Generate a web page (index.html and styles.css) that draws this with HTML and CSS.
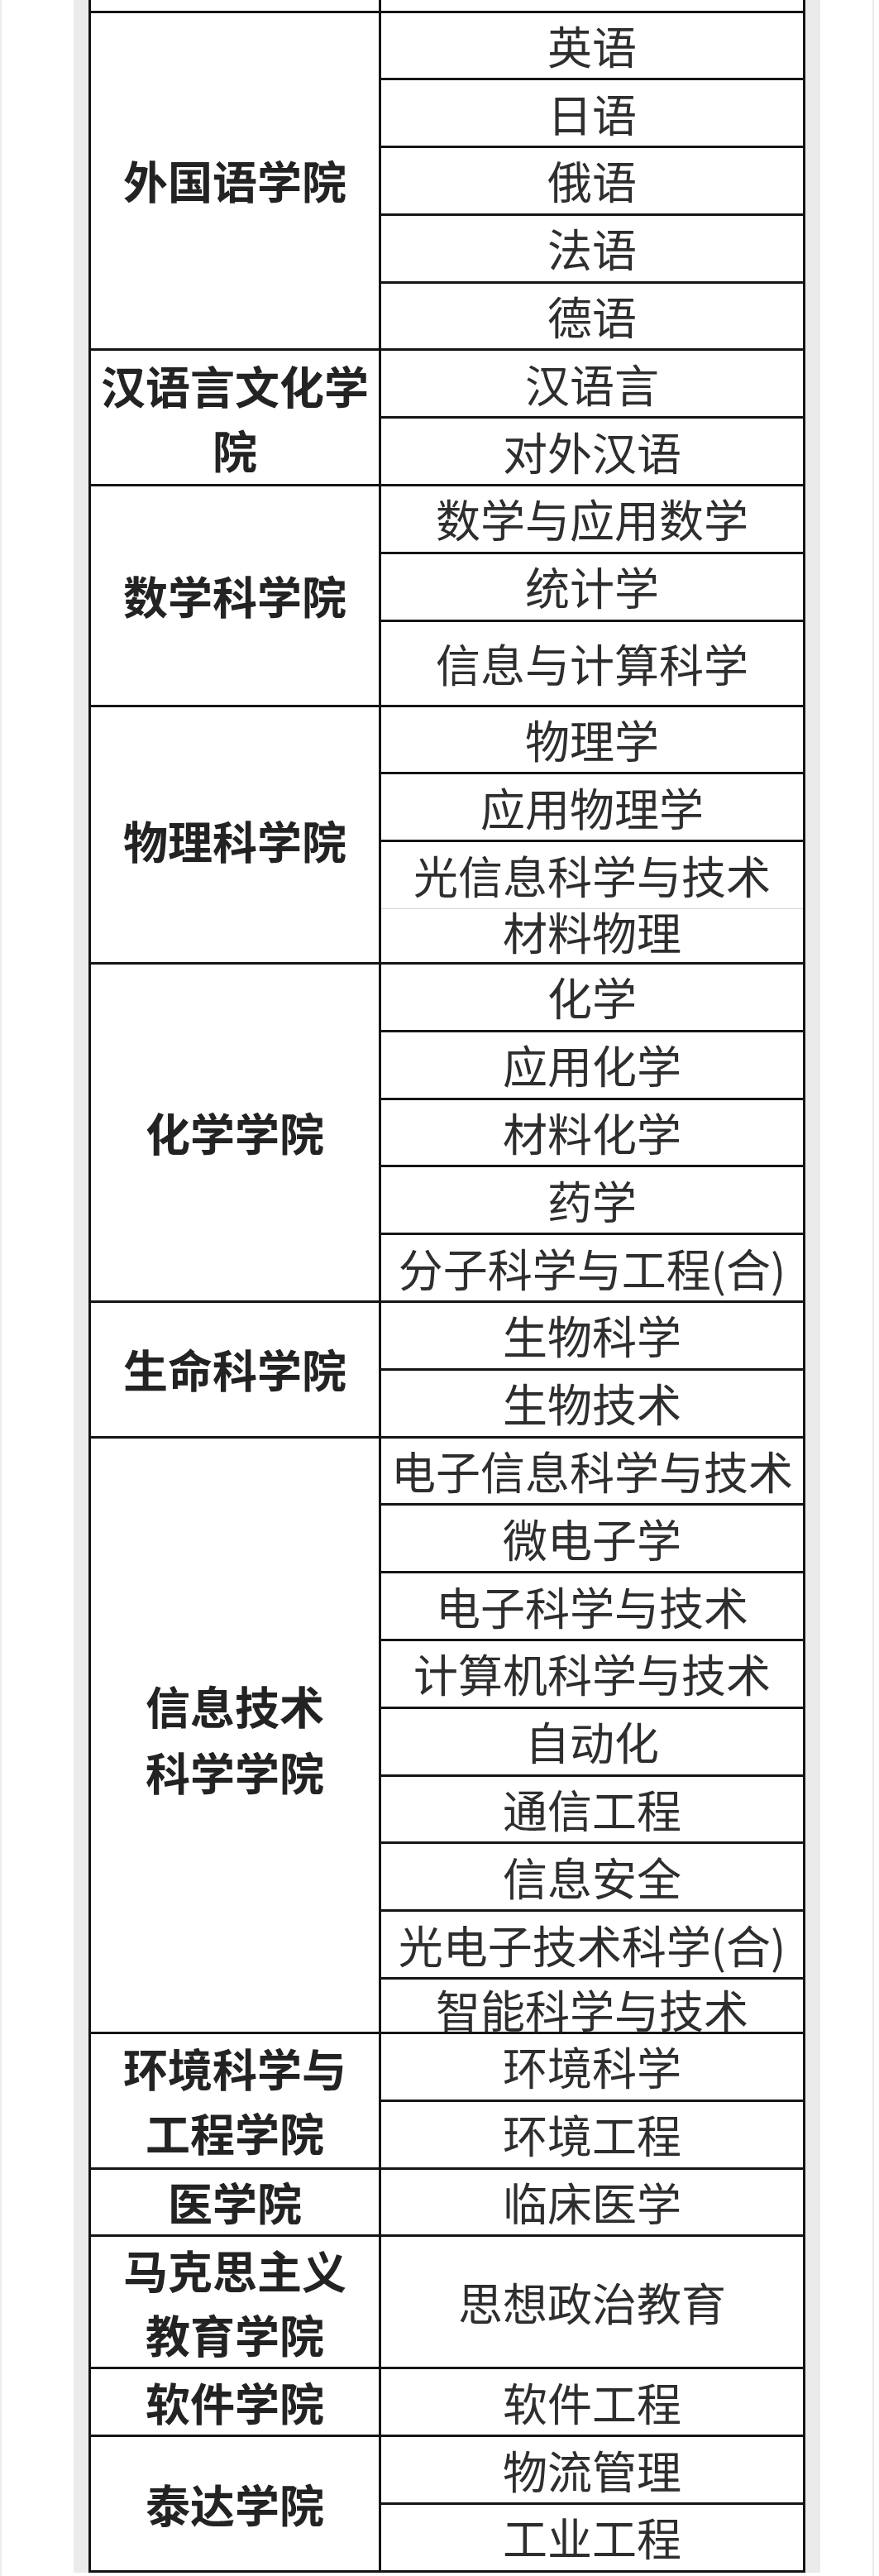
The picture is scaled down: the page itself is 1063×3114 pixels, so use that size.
FILE: index.html
```html
<!DOCTYPE html>
<html lang="zh-CN">
<head>
<meta charset="utf-8">
<title>学院专业设置</title>
<link rel="stylesheet" href="styles.css">
</head>
<body>
<div class="screen">
  <div class="sheet">
    <table class="majors">
      <colgroup><col class="c-college"><col class="c-major"></colgroup>
      <tbody>
        <tr class="r-top"><td></td><td></td></tr>

        <tr><th rowspan="5">外国语学院</th><td>英语</td></tr>
        <tr><td>日语</td></tr>
        <tr><td>俄语</td></tr>
        <tr><td>法语</td></tr>
        <tr><td>德语</td></tr>

        <tr><th rowspan="2" class="multi">汉语言文化学院</th><td>汉语言</td></tr>
        <tr><td>对外汉语</td></tr>

        <tr><th rowspan="3">数学科学院</th><td>数学与应用数学</td></tr>
        <tr><td>统计学</td></tr>
        <tr class="r-tall"><td>信息与计算科学</td></tr>

        <tr><th rowspan="4" class="lower">物理科学院</th><td>物理学</td></tr>
        <tr><td>应用物理学</td></tr>
        <tr><td class="faint-bottom">光信息科学与技术</td></tr>
        <tr class="r-short"><td class="faint-top top-cut">材料物理</td></tr>

        <tr><th rowspan="5">化学学院</th><td>化学</td></tr>
        <tr><td>应用化学</td></tr>
        <tr><td>材料化学</td></tr>
        <tr><td>药学</td></tr>
        <tr><td>分子科学与工程(合)</td></tr>

        <tr><th rowspan="2">生命科学院</th><td>生物科学</td></tr>
        <tr><td>生物技术</td></tr>

        <tr><th rowspan="9" class="multi lower">信息技术<br>科学学院</th><td>电子信息科学与技术</td></tr>
        <tr><td>微电子学</td></tr>
        <tr><td>电子科学与技术</td></tr>
        <tr><td>计算机科学与技术</td></tr>
        <tr><td>自动化</td></tr>
        <tr><td>通信工程</td></tr>
        <tr><td>信息安全</td></tr>
        <tr><td>光电子技术科学(合)</td></tr>
        <tr class="r-short"><td class="bottom-cut">智能科学与技术</td></tr>

        <tr><th rowspan="2" class="multi">环境科学与<br>工程学院</th><td>环境科学</td></tr>
        <tr><td>环境工程</td></tr>

        <tr><th>医学院</th><td>临床医学</td></tr>

        <tr class="r-double"><th class="multi">马克思主义<br>教育学院</th><td>思想政治教育</td></tr>

        <tr><th>软件学院</th><td>软件工程</td></tr>

        <tr><th rowspan="2">泰达学院</th><td>物流管理</td></tr>
        <tr><td>工业工程</td></tr>
      </tbody>
    </table>
  </div>
</div>
</body>
</html>
```

FILE: styles.css
```css
html, body {
  margin: 0;
  padding: 0;
  background: #ffffff;
}

.screen {
  width: 1057px;
  height: 3114px;
  box-sizing: border-box;
  border-left: 2px solid #ececec;
  border-right: 2px solid #ececec;
  overflow: hidden;
  background: #ffffff;
}

.sheet {
  margin-left: 87px;
  width: 867px;
  padding: 0 18px 0 18px;
  background: #ebebeb;
}

.majors {
  border-collapse: collapse;
  table-layout: fixed;
  width: 867px;
  font-family: "Noto Sans CJK SC", "Noto Sans", sans-serif;
  font-size: 54px;
  background: #ffffff;
}

.c-college { width: 351px; }
.c-major { width: 513px; }

.majors tr { height: 81.8px; }
.majors tr.r-top { height: 14px; }
.majors tr.r-tall { height: 103px; }
.majors tr.r-short { height: 66px; }
.majors tr.r-double { height: 160px; }

.majors th,
.majors td {
  border: 3px solid #151515;
  padding: 0;
  text-align: center;
  vertical-align: middle;
}

.majors th {
  font-weight: 700;
  color: #232323;
  line-height: 64px;
}

.majors th.multi {
  line-height: 78px;
}

.majors th.lower {
  padding-top: 14px;
}

.majors th.multi.lower {
  line-height: 80px;
  padding-top: 10px;
}

.majors td {
  font-weight: 400;
  color: #2e2e2e;
  line-height: 60px;
  white-space: nowrap;
}

.majors tr.r-top td {
  border-top: none;
}

.majors td.faint-bottom {
  border-bottom: 1px solid #d4d4d4;
}

.majors td.faint-top {
  border-top: 1px solid #d4d4d4;
}

.majors td.top-cut {
  vertical-align: top;
  line-height: 54px;
}

.majors td.bottom-cut {
  vertical-align: bottom;
  line-height: 54px;
}
```
